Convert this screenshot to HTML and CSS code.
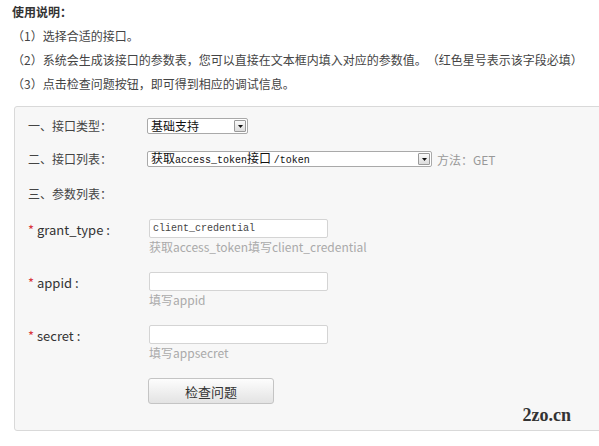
FILE: index.html
```html
<!DOCTYPE html>
<html lang="zh-CN">
<head>
    <meta charset="UTF-8">
    <meta name="viewport" content="width=device-width, initial-scale=1.0">
    <title>接口调试</title>
    <link rel="stylesheet" href="styles.css">
</head>
<body>
    <section class="page">
        <h4 class="title">使用说明：</h4>
        <p class="tip">（1）选择合适的接口。</p>
        <p class="tip">（2）系统会生成该接口的参数表，您可以直接在文本框内填入对应的参数值。（红色星号表示该字段必填）</p>
        <p class="tip">（3）点击检查问题按钮，即可得到相应的调试信息。</p>

        <div class="panel">
            <div class="row">
                <span class="label">一、接口类型：</span>
                <div class="select select-short">
                    <span class="select-text">基础支持</span>
                    <span class="select-arrow"><svg width="5" height="3" viewBox="0 0 5 3"><path d="M0 0h5L2.5 3z" fill="#111"/></svg></span>
                </div>
            </div>
            <div class="row">
                <span class="label">二、接口列表：</span>
                <div class="select select-long">
                    <span class="select-text">获取<span class="mono">access_token</span>接口 <span class="mono">/token</span></span>
                    <span class="select-arrow"><svg width="5" height="3" viewBox="0 0 5 3"><path d="M0 0h5L2.5 3z" fill="#111"/></svg></span>
                </div>
                <span class="method">方法：GET</span>
            </div>
            <div class="row row-heading">
                <span class="label">三、参数列表：</span>
            </div>

            <div class="param">
                <label class="param-label" for="grant_type"><em>*</em> grant_type :</label>
                <div class="field">
                    <input class="input" id="grant_type" type="text" value="client_credential">
                    <div class="hint">获取access_token填写client_credential</div>
                </div>
            </div>
            <div class="param">
                <label class="param-label" for="appid"><em>*</em> appid :</label>
                <div class="field">
                    <input class="input" id="appid" type="text">
                    <div class="hint">填写appid</div>
                </div>
            </div>
            <div class="param">
                <label class="param-label" for="secret"><em>*</em> secret :</label>
                <div class="field">
                    <input class="input" id="secret" type="text">
                    <div class="hint">填写appsecret</div>
                </div>
            </div>

            <div class="actions">
                <button type="button" class="btn">检查问题</button>
            </div>

            <div class="watermark">2zo.cn</div>
        </div>
    </section>
</body>
</html>
```

FILE: styles.css
```css
html,
body {
  margin: 0;
  overflow: hidden;
  background: #fff;
}

body {
  font-family: "Noto Sans CJK SC", "Noto Sans", sans-serif;
  font-size: 12px;
  color: #444;
  text-spacing-trim: space-all;
}

.page {
  padding-left: 12px;
}

.title {
  margin: 0;
  font-size: 12px;
  line-height: 24px;
  font-weight: bold;
  color: #333;
}

.tip {
  margin: 0;
  line-height: 24px;
  white-space: nowrap;
}

.panel {
  position: relative;
  margin: 10px -20px 0 2px;
  padding: 11px 13px 26px;
  background: #f7f7f7;
  border: 1px solid #d9d9d9;
  border-radius: 3px;
}

.row {
  display: flex;
  align-items: center;
  height: 16px;
  margin-bottom: 17px;
}

.row-heading {
  margin-top: 19px;
}

.label {
  width: 119px;
  flex-shrink: 0;
  line-height: 16px;
}

.select {
  display: flex;
  align-items: center;
  box-sizing: border-box;
  height: 16px;
  padding: 0 1px 0 3px;
  background: #fff;
  border: 1px solid #a9a9a9;
  border-radius: 2px;
  color: #111;
}

.select-short {
  width: 101px;
}

.select-long {
  width: 285px;
}

.select-text {
  flex: 1;
  line-height: 14px;
  white-space: nowrap;
}

.mono {
  font-family: "Liberation Mono", monospace;
  font-size: 10px;
}

.select-arrow {
  display: flex;
  align-items: center;
  justify-content: center;
  box-sizing: border-box;
  width: 12px;
  height: 12px;
  border: 1px solid #9a9a9a;
  border-radius: 1px;
  background: linear-gradient(#fafafa, #dcdcdc);
}

.method {
  margin-left: 5px;
  color: #999;
}

.param {
  display: flex;
  margin-bottom: 17px;
}

.param-label {
  width: 121px;
  flex-shrink: 0;
  padding-top: 1px;
  font-size: 13px;
  line-height: 19px;
  color: #333;
}

.param-label em {
  font-style: normal;
  color: #d9363e;
}

.field {
  display: flex;
  flex-direction: column;
}

.input {
  box-sizing: border-box;
  width: 179px;
  height: 19px;
  margin: 0;
  padding: 0 3px;
  background: #fff;
  border: 1px solid #d4d4d4;
  border-radius: 2px;
  font-family: "Liberation Mono", monospace;
  font-size: 10px;
  color: #444;
}

.hint {
  margin-top: 1px;
  line-height: 16px;
  color: #aaa;
}

.actions {
  padding-left: 120px;
  margin-top: 9px;
}

.btn {
  width: 126px;
  height: 26px;
  background: linear-gradient(#fdfdfd, #e3e3e3);
  border: 1px solid #c4c4c4;
  border-radius: 3px;
  font-family: "Noto Sans CJK SC", sans-serif;
  font-size: 13px;
  color: #333;
  cursor: pointer;
}

.watermark {
  position: absolute;
  right: 47px;
  bottom: 4px;
  font-family: "Liberation Serif", serif;
  font-weight: bold;
  font-size: 18px;
  color: #333;
}
```
